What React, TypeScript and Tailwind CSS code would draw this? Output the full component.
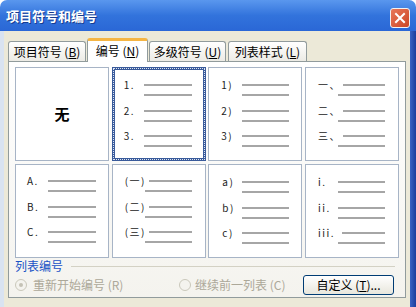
import React from "react";

type CardDef = {
  pad: string;
  numCls: string;
  rowW: string;
  line2: string;
  items: { n: string; numCls?: string }[];
  sel?: boolean;
};

const LINE = "h-[2px] bg-[#a6a6a6]";

const cards: CardDef[] = [
  {
    pad: "pt-[9px]",
    numCls: "pl-[9px] w-[29px]",
    rowW: "w-[77px]",
    line2: "ml-[29px] w-[48px]",
    items: [{ n: "1." }, { n: "2." }, { n: "3." }],
    sel: true,
  },
  {
    pad: "pt-[11px]",
    numCls: "pl-[12px] w-[33px]",
    rowW: "w-[80px]",
    line2: "ml-[33px] w-[47px]",
    items: [{ n: "1)" }, { n: "2)" }, { n: "3)" }],
  },
  {
    pad: "pt-[11px]",
    numCls: "pl-[12px] w-[37px]",
    rowW: "w-[79px]",
    line2: "ml-[32px] w-[47px]",
    items: [{ n: "一、" }, { n: "二、" }, { n: "三、" }],
  },
  {
    pad: "pt-[10px]",
    numCls: "pl-[11px] w-[32px]",
    rowW: "w-[80px]",
    line2: "ml-[32px] w-[48px]",
    items: [{ n: "A." }, { n: "B." }, { n: "C." }],
  },
  {
    pad: "pt-[10px]",
    numCls: "pl-[12px] w-[36px]",
    rowW: "w-[79px]",
    line2: "ml-[32px] w-[47px]",
    items: [{ n: "(一)" }, { n: "(二)" }, { n: "(三)" }],
  },
  {
    pad: "pt-[11px]",
    numCls: "pl-[13px] w-[33px]",
    rowW: "w-[80px]",
    line2: "ml-[33px] w-[47px]",
    items: [{ n: "a)" }, { n: "b)" }, { n: "c)" }],
  },
  {
    pad: "pt-[11px]",
    numCls: "pl-[12px] w-[32px]",
    rowW: "w-[79px]",
    line2: "ml-[32px] w-[47px]",
    items: [{ n: "i." }, { n: "ii." }, { n: "iii.", numCls: "pl-[12px] w-[36px]" }],
  },
];

function Card({ c }: { c: CardDef }) {
  return (
    <div
      className={
        "h-[94px] bg-white flex flex-col " +
        c.pad +
        " " +
        (c.sel
          ? "border-[3px] border-[#3a5b9b] outline-1 outline-dotted outline-[#dfe6f3] outline-offset-[-2px]"
          : "border border-[#a7b4c6]")
      }
    >
      {c.items.map((it) => (
        <div key={it.n} className="h-[25.5px] flex flex-col">
          <div className={"flex items-center h-[12px] " + c.rowW}>
            <span
              className={
                "shrink-0 text-[10px] leading-none whitespace-nowrap tracking-[1.5px] text-[#222] " +
                (it.numCls ?? c.numCls)
              }
            >
              {it.n}
            </span>
            <div className={"flex-1 " + LINE} />
          </div>
          <div className={"mt-[3px] " + LINE + " " + c.line2} />
        </div>
      ))}
    </div>
  );
}

function Tab({ label, acc, w, sel }: { label: string; acc: string; w: string; sel?: boolean }) {
  return (
    <div
      className={
        "flex items-center justify-center text-[12px] text-black rounded-t-[3px] border-x border-[#919b9c] " +
        w +
        " " +
        (sel
          ? "h-[24px] -mb-px relative z-10 bg-white border-t-[3px] border-t-[#f5b544] pb-[2px]"
          : "h-[20px] border-t bg-gradient-to-b from-white to-[#ecebe5]")
      }
    >
      <span className="whitespace-pre">
        {label} (<span className="underline">{acc}</span>)
      </span>
    </div>
  );
}

function Radio({ checked }: { checked?: boolean }) {
  return (
    <div className="w-[12px] h-[12px] rounded-full border border-[#cac8bb] bg-[#f4f3ee] flex items-center justify-center shrink-0">
      {checked && <div className="w-[4px] h-[4px] rounded-full bg-[#c4c2b5]" />}
    </div>
  );
}

export default function App() {
  return (
    <div className="w-[416px] h-[307px] bg-white overflow-hidden font-['Noto_Sans_CJK_SC',sans-serif]">
      <div className="flex flex-col h-full">
        <div className="h-[31px] shrink-0 rounded-t-[7px] bg-gradient-to-b from-[#5a97ee] via-[#3273dc] to-[#2a67d6] flex items-center justify-between pl-[6px] pr-[6px]">
          <span className="text-white font-bold text-[13px] leading-none [text-shadow:1px_1px_#173b8f]">
            项目符号和编号
          </span>
          <div className="w-[20px] h-[20px] mt-[5px] rounded-[3px] border border-[#f2f2f2] bg-gradient-to-br from-[#e8785a] to-[#cc4522] flex items-center justify-center">
            <svg width="12" height="12" viewBox="0 0 12 12">
              <path d="M2 2L10 10M10 2L2 10" stroke="white" strokeWidth="2" strokeLinecap="square" />
            </svg>
          </div>
        </div>
        <div className="flex flex-1">
          <div className="w-[4px] bg-[#d9e3f1]" />
          <div className="flex-1 bg-[#ece9d8] pt-[7px] px-[4px] flex flex-col">
            <div className="flex items-end h-[23px]">
              <div className="mr-px">
                <Tab label="项目符号" acc="B" w="w-[78px]" />
              </div>
              <div className="mr-px">
                <Tab label="编号" acc="N" w="w-[61px]" sel />
              </div>
              <div className="mr-[2px]">
                <Tab label="多级符号" acc="U" w="w-[77px]" />
              </div>
              <Tab label="列表样式" acc="L" w="w-[79px]" />
            </div>
            <div className="h-[237px] border border-[#919b9c] bg-gradient-to-b from-white to-[#f4f3ee] pt-[5px] pl-[6px] pr-[6px] flex flex-col">
              <div className="grid grid-cols-[94px_94px_94px_94px] gap-x-[2.67px] gap-y-[3px]">
                <div className="h-[94px] bg-white border border-[#a7b4c6] flex items-center justify-center">
                  <span className="font-bold text-[15px] text-black">无</span>
                </div>
                {cards.map((c, i) => (
                  <Card key={i} c={c} />
                ))}
              </div>
              <div className="flex items-center mt-[1px] h-[14px]">
                <span className="text-[12px] leading-[14px] text-[#1a52c6]">列表编号</span>
                <div className="flex-1 h-px bg-[#d3d1c4] ml-[8px] mr-[4px]" />
              </div>
              <div className="flex items-center h-[20px] mt-[2px]">
                <div className="w-[164px] flex items-center">
                  <Radio checked />
                  <span className="ml-[6px] text-[12px] text-[#aca899] whitespace-pre">重新开始编号 (R)</span>
                </div>
                <div className="flex items-center">
                  <Radio />
                  <span className="ml-[4px] text-[12px] text-[#aca899] whitespace-pre">继续前一列表 (C)</span>
                </div>
                <div className="ml-auto mr-[5px] w-[91px] h-[20px] border border-[#003c74] rounded-[3px] bg-gradient-to-b from-white to-[#e8e6dc] flex items-center justify-center text-[12px] text-black">
                  <span className="whitespace-pre">
                    自定义 (<span className="underline">T</span>)...
                  </span>
                </div>
              </div>
            </div>
          </div>
          <div className="w-[6px] bg-gradient-to-r from-[#3a62c4] to-[#1c3c9c]" />
        </div>
      </div>
    </div>
  );
}
